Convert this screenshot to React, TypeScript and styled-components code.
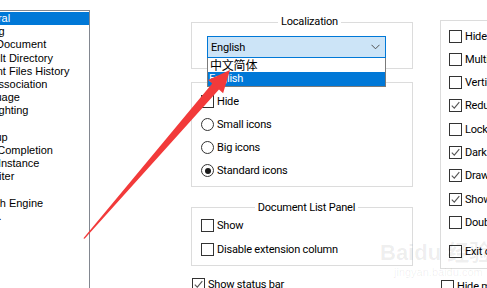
import styled, { createGlobalStyle } from "styled-components";

const Global = createGlobalStyle`
  html, body { margin: 0; padding: 0; background: #fff; }
  body { font-family: Roboto, "Liberation Sans", sans-serif; color: #000; }
`;

const Page = styled.div`
  position: relative;
  width: 487px;
  height: 288px;
  overflow: hidden;
  display: flex;
  align-items: flex-start;
  font-size: 11px;
  letter-spacing: -0.2px;
`;

const PageList = styled.ul`
  list-style: none;
  margin: 10px 0 0 -40px;
  padding: 1px 0 0;
  width: 128px;
  height: 320px;
  flex: none;
  border: 1px solid #828790;
  font-family: "Liberation Sans", sans-serif;
  font-size: 11px;
  letter-spacing: 0;
`;

const PageItem = styled.li<{ $active?: boolean }>`
  height: 13.2px;
  line-height: 13px;
  padding-left: 10px;
  white-space: nowrap;
  background: ${(p) => (p.$active ? "#0078d7" : "transparent")};
  color: ${(p) => (p.$active ? "#fff" : "#000")};
`;

const MidColumn = styled.div`
  width: 222px;
  margin-left: 101px;
  margin-top: 15px;
  flex: none;
  display: flex;
  flex-direction: column;
`;

const RightColumn = styled.div`
  width: 110px;
  margin-left: 27px;
  margin-top: 20px;
  flex: none;
  display: flex;
  flex-direction: column;
`;

const Group = styled.fieldset<{ $pad: string; $top?: number }>`
  margin: ${(p) => p.$top ?? 0}px 0 0;
  border: 1px solid #dcdcdc;
  padding: ${(p) => p.$pad};
  display: flex;
  flex-direction: column;
  min-width: 0;
  position: relative;
`;

const Legend = styled.legend`
  margin: 0 auto;
  padding: 0 3px;
  line-height: 14px;
`;

const Rows = styled.div<{ $gap: number }>`
  display: flex;
  flex-direction: column;
  gap: ${(p) => p.$gap}px;
`;

const Row = styled.label<{ $shift?: number }>`
  display: flex;
  align-items: center;
  gap: 3px;
  height: 20px;
  white-space: nowrap;
  margin-top: ${(p) => p.$shift ?? 0}px;
`;

const Box = styled.span`
  width: 11px;
  height: 11px;
  border: 1px solid #333;
  background: #fff;
  flex: none;
  display: flex;
  align-items: center;
  justify-content: center;
`;

const Radio = styled.span<{ $on?: boolean }>`
  width: 11px;
  height: 11px;
  border: 1px solid #333;
  border-radius: 50%;
  background: #fff;
  flex: none;
  display: flex;
  align-items: center;
  justify-content: center;
  &::after {
    content: "";
    width: 6px;
    height: 6px;
    border-radius: 50%;
    background: ${(p) => (p.$on ? "#1a1a1a" : "transparent")};
  }
`;

const ComboWrap = styled.div`
  position: relative;
  width: 179px;
`;

const Combo = styled.div`
  height: 20px;
  border: 1px solid #0078d7;
  background: #cce4f7;
  display: flex;
  align-items: center;
  justify-content: space-between;
  padding: 0 5px 0 3px;
`;

const DropList = styled.div`
  position: absolute;
  top: 22px;
  left: 0;
  width: 177px;
  border: 1px solid #7a7a7a;
  border-top: none;
  background: #fff;
  z-index: 2;
`;

const DropItem = styled.div<{ $active?: boolean; $cjk?: boolean }>`
  height: 14px;
  line-height: 14px;
  padding-left: ${(p) => (p.$cjk ? 2 : 1)}px;
  font-family: ${(p) => (p.$cjk ? '"Noto Sans CJK SC", sans-serif' : "Roboto, sans-serif")};
  font-size: ${(p) => (p.$cjk ? "12px" : "11px")};
  background: ${(p) => (p.$active ? "#0078d7" : "#fff")};
  color: ${(p) => (p.$active ? "#fff" : "#000")};
`;

const Loose = styled.div<{ $top: number; $left: number }>`
  margin-top: ${(p) => p.$top}px;
  margin-left: ${(p) => p.$left}px;
`;

const Overlay = styled.svg`
  position: absolute;
  left: 0;
  top: 0;
  pointer-events: none;
  z-index: 5;
`;

const Watermark = styled.div`
  position: absolute;
  left: 380px;
  top: 240px;
  color: rgba(0, 0, 0, 0.07);
  font-family: "Liberation Sans", "Noto Sans CJK SC", sans-serif;
  letter-spacing: 0;
  white-space: nowrap;
  z-index: 4;
  pointer-events: none;
`;

const MarkTitle = styled.div`
  font-size: 22px;
  font-weight: bold;
  line-height: 26px;
`;

const MarkSub = styled.div`
  font-size: 11px;
  padding-left: 14px;
`;

const pages = [
  "General", "Editing", "New Document", "Default Directory", "Recent Files History",
  "File Association", "Language", "Highlighting", "Print", "Backup", "Auto-Completion",
  "Multi-Instance", "Delimiter", "Cloud", "Search Engine", "MISC.",
];

const Check = ({ on }: { on?: boolean }) => (
  <Box>
    {on && (
      <svg width="9" height="9" viewBox="0 0 9 9">
        <path d="M0.8 4.6 L3.3 7.2 L8.3 1.2" fill="none" stroke="#555" strokeWidth="1.1" />
      </svg>
    )}
  </Box>
);

const Chevron = () => (
  <svg width="9" height="6" viewBox="0 0 9 6">
    <path d="M0.5 0.8 L4.5 4.8 L8.5 0.8" fill="none" stroke="#505050" strokeWidth="1" />
  </svg>
);

const rightItems: [string, boolean, number?][] = [
  ["Hide", false], ["Multi", false], ["Vertical", false], ["Reduce", true], ["Lock", false],
  ["Dark", true], ["Draw", true], ["Show", true], ["Double", false], ["Exit on close", false, 6],
];

export default function App() {
  return (
    <>
      <Global />
      <Page>
        <PageList>
          {pages.map((p, i) => (
            <PageItem key={p} $active={i === 0}>{p}</PageItem>
          ))}
        </PageList>

        <MidColumn>
          <Group $pad="7px 0 10px 15px">
            <Legend>Localization</Legend>
            <ComboWrap>
              <Combo>
                <span>English</span>
                <Chevron />
              </Combo>
              <DropList>
                <DropItem $cjk>中文简体</DropItem>
                <DropItem $active>English</DropItem>
              </DropList>
            </ComboWrap>
          </Group>

          <Group $pad="2px 0 5px 9px" $top={6}>
            <Legend>Toolbar</Legend>
            <Rows $gap={3.3}>
              <Row><Check />Hide</Row>
              <Row><Radio />Small icons</Row>
              <Row><Radio />Big icons</Row>
              <Row><Radio $on />Standard icons</Row>
            </Rows>
          </Group>

          <Group $pad="1px 0 5px 9px" $top={14}>
            <Legend>Document List Panel</Legend>
            <Rows $gap={4}>
              <Row><Check />Show</Row>
              <Row><Check />Disable extension column</Row>
            </Rows>
          </Group>

          <Loose $top={9} $left={1}>
            <Row><Check on />Show status bar</Row>
          </Loose>
        </MidColumn>

        <RightColumn>
          <Group $pad="5px 0 6px 8px">
            <Rows $gap={3.3}>
              {rightItems.map(([t, on, s]) => (
                <Row key={t} $shift={s}><Check on={on} />{t}</Row>
              ))}
            </Rows>
          </Group>
          <Loose $top={8} $left={1}>
            <Row><Check />Hide menu bar</Row>
          </Loose>
        </RightColumn>

        <Watermark>
          <MarkTitle>Baidu 经验</MarkTitle>
          <MarkSub>jingyan.baidu.com</MarkSub>
        </Watermark>

        <Overlay width="487" height="288" viewBox="0 0 487 288">
          <polygon
            points="83.4,238.3 84.6,238.7 219,89.6 223.1,93.2 230,70 208.1,80 212.2,83.6"
            fill="#f23a3a"
          />
        </Overlay>
      </Page>
    </>
  );
}
